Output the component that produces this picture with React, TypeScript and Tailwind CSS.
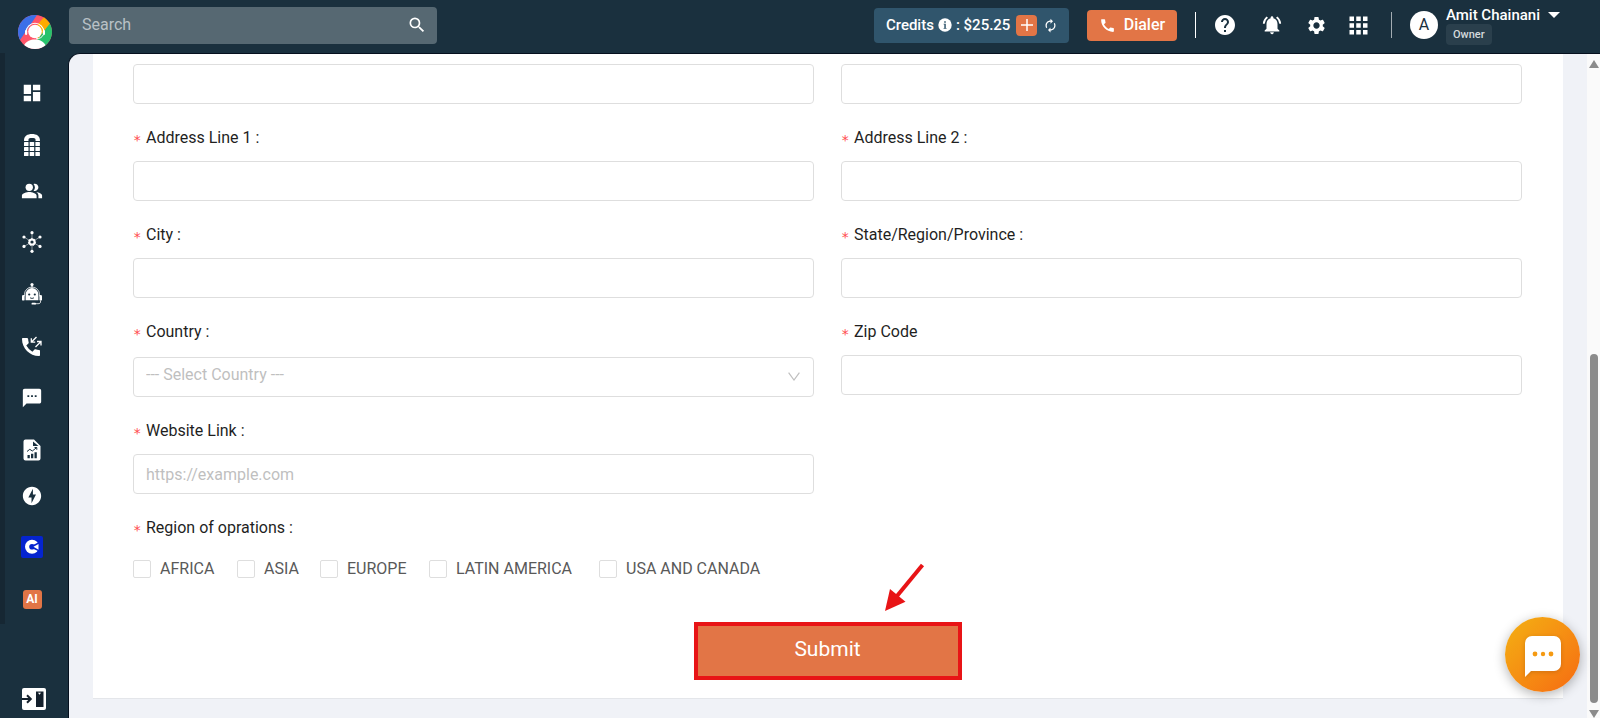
import { useState } from "react";
import type { ReactNode } from "react";
import {
  MdApps,
  MdAutorenew,
  MdCall,
  MdDashboard,
  MdHelp,
  MdNotificationsActive,
  MdOfflineBolt,
  MdPeopleAlt,
  MdSearch,
  MdSettings,
  MdSms,
} from "react-icons/md";

function Logo() {
  return (
    <svg viewBox="0 0 34 34" className="h-[34px] w-[34px]" aria-hidden="true">
      <defs>
        <clipPath id="logo-disc">
          <circle cx="17" cy="17" r="17" />
        </clipPath>
      </defs>
      <g clipPath="url(#logo-disc)">
        <rect width="34" height="34" fill="#ff5569" />
        <path d="M0 0H19L2 25H-6Z" fill="#3c6fe8" />
        <path d="M27 1L33 8L20 24L14 16Z" fill="#ffab00" />
        <path d="M33 7L40 18L28 34L19 25Z" fill="#27c26c" />
        <path d="M5 34C6 27 11 24.500 17 24.500S27 27 29 34Z" fill="#fff" />
        <path d="M8.200 17A8.800 8.800 0 0 1 25.800 17" fill="none" stroke="#fff" strokeWidth="1.100" />
        <rect x="7" y="15" width="2.200" height="5" rx="1.100" fill="#fff" />
        <rect x="24.800" y="15" width="2.200" height="5" rx="1.100" fill="#fff" />
        <circle cx="17" cy="16.500" r="6.800" fill="#fff" />
        <path d="M25.500 19.500C24 22.500 22 23.600 18 23.800" fill="none" stroke="#fff" strokeWidth="1" />
      </g>
    </svg>
  );
}

function KeypadIcon() {
  return (
    <svg viewBox="0 0 18 22" className="h-[22px] w-[18px]" fill="currentColor" aria-hidden="true">
      <path d="M1 6.500C1 2 4.500 0 9 0s8 2 8 6.500c0 .4-.2.500-.6.500h-3.300c-.4 0-.6-.2-.6-.6V5.200C12.500 4.400 11 4 9 4s-3.500.4-3.500 1.200v1.200c0 .4-.2.600-.6.600H1.600C1.200 7 1 6.900 1 6.500Z" />
      {[8, 13, 18].map((y) =>
        [1, 6.7, 12.4].map((x) => <rect key={`${x}-${y}`} x={x} y={y} width="4.500" height="4" rx=".5" />),
      )}
    </svg>
  );
}

function HubIcon() {
  const tips = [
    [10, 1.7],
    [18, 6],
    [18, 15.4],
    [10, 20.3],
    [2, 15.4],
    [2, 6],
  ];
  return (
    <svg viewBox="0 0 20 22" className="h-[22px] w-5" fill="currentColor" aria-hidden="true">
      {tips.map(([x, y]) => (
        <g key={`${x}-${y}`}>
          <path d={`M10 11L${x} ${y}`} stroke="currentColor" strokeWidth=".5" />
          <circle cx={x} cy={y} r="1.600" />
        </g>
      ))}
      <circle cx="10" cy="11" r="3.600" strokeDasharray="1.600 1.500" stroke="currentColor" strokeWidth="1" />
      <circle cx="10" cy="11" r="1.600" fill="#1a303e" />
    </svg>
  );
}

function BotIcon() {
  return (
    <svg viewBox="0 0 20 22" className="h-[22px] w-5" aria-hidden="true">
      <circle cx="10" cy="1.600" r="1.600" fill="#fff" />
      <path d="M10 2V5" stroke="#fff" strokeWidth="1" />
      <path d="M2.500 13V11.500a7.500 7.500 0 0 1 15 0V13" fill="none" stroke="#fff" strokeWidth=".8" />
      <path d="M3.600 17.300V11.500a6.400 6.400 0 0 1 12.800 0V17.300Z" fill="#fff" />
      <rect x="0" y="12" width="2.600" height="5.600" rx="1.200" fill="#fff" />
      <rect x="17.400" y="12" width="2.600" height="5.600" rx="1.200" fill="#fff" />
      <circle cx="7.200" cy="11.500" r="1.100" fill="#1a303e" />
      <circle cx="12.800" cy="11.500" r="1.100" fill="#1a303e" />
      <path d="M8 14.700C9 15.600 11 15.600 12 14.700" fill="none" stroke="#1a303e" strokeWidth=".9" />
      <path d="M18.500 17.500V19C18.500 20.300 17.500 20.700 16 20.700H12" fill="none" stroke="#fff" strokeWidth=".8" />
      <rect x="9.500" y="19.800" width="4.500" height="1.800" rx=".9" fill="#fff" />
    </svg>
  );
}

function CallFlowIcon() {
  return (
    <svg viewBox="0 0 20 20" className="h-5 w-5" fill="none" aria-hidden="true">
      <path
        d="M1 2h4c.6 0 1 .4 1.100 1 .1 1.200.3 2.300.6 3.400.1.400 0 .8-.3 1.100L4.300 9.600a15 15 0 0 0 6.100 6.100l2.100-2.100c.3-.3.700-.4 1.100-.3 1.100.4 2.200.6 3.400.6.600 0 1 .500 1 1.100v4c0 .600-.4 1-1 1C7.600 20 0 12.400 0 3c0-.6.4-1 1-1Z"
        fill="#fff"
      />
      <path d="M14.500 1L9.300 6.200M9.300 2.300V6.200H13.200" stroke="#fff" strokeWidth="1.300" />
      <path d="M13.500 11L18.800 5.700M15 5.500H19V9.500" stroke="#fff" strokeWidth="1.300" />
    </svg>
  );
}

function ReportIcon() {
  return (
    <svg viewBox="0 0 18 22" className="h-[22px] w-[18px]" aria-hidden="true">
      <path d="M2.500.5H11L17.500 7V19.500a2 2 0 0 1-2 2h-13a2 2 0 0 1-2-2V2.500a2 2 0 0 1 2-2Z" fill="#fff" />
      <path d="M10 2.500V7H15.500Z" fill="#1a303e" />
      <path d="M4 12.500L6.800 10.300L9.300 12L13.500 8.700M11.500 8.500H13.800V10.800" fill="none" stroke="#1a303e" strokeWidth="1" />
      <path d="M4.500 16H6.800V19.200H4.500ZM8 14.700H10.300V19.200H8ZM11.500 13.200H13.800V19.200H11.500Z" fill="#1a303e" />
    </svg>
  );
}

function PartnerIcon() {
  return (
    <svg viewBox="0 0 22 22" className="h-[22px] w-[22px]" aria-hidden="true">
      <rect width="22" height="22" rx="2" fill="#0524cf" />
      <circle cx="11" cy="10.800" r="7" fill="#fff" />
      <circle cx="11" cy="10.800" r="2.800" fill="#0524cf" />
      <path d="M11 9.500L17 6.500L19 4.500V17L17 15L11 12.200Z" fill="#0524cf" />
      <path d="M12.500 10.800L17.500 7.900V13.700Z" fill="#fff" />
    </svg>
  );
}

function ExpandIcon() {
  return (
    <svg viewBox="0 0 24 22" className="h-[22px] w-6" aria-hidden="true">
      <rect width="24" height="22" rx="2" fill="#fff" />
      <rect x="14" y="3.500" width="7.500" height="15.500" fill="#14202c" />
      <path d="M16 4.700H19L17.500 6.800Z" fill="#fff" />
      <path d="M0 11H8M5 7.200L8.800 11L5 14.800" fill="none" stroke="#14202c" strokeWidth="2" />
    </svg>
  );
}

const navItems: { label: string; icon: ReactNode; compact?: boolean }[] = [
  { label: "Dashboard", icon: <MdDashboard size={22} /> },
  { label: "Numbers", icon: <KeypadIcon /> },
  { label: "Contacts", icon: <MdPeopleAlt size={22} />, compact: true },
  { label: "Integrations", icon: <HubIcon /> },
  { label: "Bots", icon: <BotIcon /> },
  { label: "Call flows", icon: <CallFlowIcon /> },
  { label: "Messages", icon: <MdSms size={22} /> },
  { label: "Reports", icon: <ReportIcon /> },
  { label: "Automation", icon: <MdOfflineBolt size={22} />, compact: true },
  { label: "Partner", icon: <PartnerIcon /> },
  {
    label: "Assistant",
    icon: (
      <span className="flex h-[19px] w-[19px] items-center justify-center rounded-[3px] bg-[#e27546] text-xs font-bold">
        AI
      </span>
    ),
  },
];

function Sidebar() {
  return (
    <aside className="flex w-[68px] shrink-0 flex-col justify-between pb-2">
      <nav className="flex h-[571px] flex-col rounded-br border-l-[5px] border-[#162733] pt-3.5">
        {navItems.map((item) => (
          <a
            key={item.label}
            href="#"
            aria-label={item.label}
            className={
              item.compact
                ? "mb-[5px] ml-4 flex h-10 w-[22px] shrink-0 items-center justify-center"
                : "ml-4 flex h-[52px] w-[22px] shrink-0 items-center justify-center"
            }
          >
            {item.icon}
          </a>
        ))}
      </nav>
      <button type="button" aria-label="Expand menu" className="ml-[22px] w-6">
        <ExpandIcon />
      </button>
    </aside>
  );
}

function Header() {
  return (
    <header className="flex h-[53px] shrink-0 items-center pr-10 pb-[3px]">
      <a href="#" aria-label="Home" className="flex w-[69px] shrink-0 justify-center pt-3.5">
        <Logo />
      </a>
      <div className="flex h-[37px] w-[368px] items-center rounded bg-[#566872] pr-2.5 pl-[13px]">
        <input
          type="search"
          aria-label="Search"
          placeholder="Search"
          className="min-w-0 flex-1 bg-transparent text-base text-white outline-none placeholder:text-[#b9c1c6]"
        />
        <button type="button" aria-label="Run search">
          <MdSearch size={20} />
        </button>
      </div>

      <div className="ml-auto flex items-center">
        <div className="flex h-[35px] w-[195px] items-center rounded bg-[#30556c] pl-3 text-[15px] font-medium">
          <span>Credits</span>
          <svg viewBox="0 0 14 14" className="mx-1 h-3.5 w-3.5" aria-hidden="true">
            <circle cx="7" cy="7" r="6.700" fill="#fff" />
            <path d="M6.200 3.200H7.800V4.700H6.200ZM5.600 5.800H7.800V10H8.500V10.800H5.600V10H6.300V6.600H5.600Z" fill="#30556c" />
          </svg>
          <span>: $25.25</span>
          <button
            type="button"
            aria-label="Add credits"
            className="ml-1.5 flex h-[21px] w-[21px] items-center justify-center rounded bg-[#e27546]"
          >
            <svg viewBox="0 0 12 12" className="h-3 w-3" aria-hidden="true">
              <path d="M6 0V12M0 6H12" stroke="#fff" strokeWidth="1.500" />
            </svg>
          </button>
          <button type="button" aria-label="Refresh credits" className="ml-1.5">
            <MdAutorenew size={15} />
          </button>
        </div>
        <button
          type="button"
          className="ml-[18px] flex h-[31px] w-[90px] items-center justify-center gap-2 rounded bg-[#e27546] text-base font-medium"
        >
          <MdCall size={17} />
          Dialer
        </button>
        <span className="ml-[18px] h-[26px] w-px bg-white" />
        <button type="button" aria-label="Help" className="ml-[17px]">
          <MdHelp size={24} />
        </button>
        <button type="button" aria-label="Notifications" className="ml-6">
          <MdNotificationsActive size={22} />
        </button>
        <button type="button" aria-label="Settings" className="ml-[23px]">
          <MdSettings size={21} />
        </button>
        <button type="button" aria-label="Apps" className="ml-[18px]">
          <MdApps size={27} />
        </button>
        <span className="ml-[19px] h-[26px] w-px bg-[#a3acb2]" />
        <button type="button" className="ml-[18px] flex items-center gap-2 text-left">
          <span className="flex h-7 w-7 items-center justify-center rounded-full bg-white text-base text-[#1a303e]">
            A
          </span>
          <span className="flex flex-col items-start">
            <span className="flex items-center gap-2 text-[15px] leading-[18px] font-medium">
              Amit Chainani
              <svg viewBox="0 0 12 6" className="h-1.5 w-3" aria-hidden="true">
                <path d="M0 0H12L6 6Z" fill="#fff" />
              </svg>
            </span>
            <span className="rounded bg-[#2a3f4c] px-[7px] text-[11px] leading-[21px] font-medium text-[#d5dadd]">
              Owner
            </span>
          </span>
        </button>
      </div>
    </header>
  );
}

function Label({ htmlFor, children }: { htmlFor: string; children: ReactNode }) {
  return (
    <label htmlFor={htmlFor} className="mt-[22px] flex h-6 items-center text-base text-[#1f1f1f]">
      <Star />
      {children}
    </label>
  );
}

function Star() {
  return <span className="w-[13px] pt-1 font-['DejaVu_Sans_Mono',monospace] text-sm leading-5 text-[#ff4d4f]">*</span>;
}

const fieldBox =
  "h-10 w-full rounded border border-[#dedede] bg-white px-3 text-base text-[#333] outline-none placeholder:text-[#bfbfbf]";

function Field({ id, label, placeholder }: { id: string; label: string; placeholder?: string }) {
  return (
    <div className="flex flex-col">
      <Label htmlFor={id}>{label}</Label>
      <input id={id} type="text" placeholder={placeholder} className={`mt-[11px] ${fieldBox}`} />
    </div>
  );
}

const regions = ["AFRICA", "ASIA", "EUROPE", "LATIN AMERICA", "USA AND CANADA"];

function AddressForm() {
  const [country, setCountry] = useState("");
  return (
    <form
      className="mx-6 border-b border-[#e4e6ea] bg-white pt-2.5 pr-[41px] pb-[18px] pl-10"
      onSubmit={(event) => event.preventDefault()}
    >
      <div className="grid grid-cols-2 gap-x-[27px]">
        <input type="text" aria-label="Business name" className={fieldBox} />
        <input type="text" aria-label="Business type" className={fieldBox} />
        <Field id="address1" label="Address Line 1 :" />
        <Field id="address2" label="Address Line 2 :" />
        <Field id="city" label="City :" />
        <Field id="state" label="State/Region/Province :" />
        <div className="flex flex-col">
          <Label htmlFor="country">Country :</Label>
          <div className="relative mt-[13px]">
            <select
              id="country"
              value={country}
              onChange={(event) => setCountry(event.target.value)}
              className="h-10 w-full appearance-none rounded border border-[#dedede] bg-white px-3 pb-1 text-base text-[#bfbfbf] outline-none"
            >
              <option value="">--- Select Country ---</option>
              <option value="IN">India</option>
              <option value="US">United States</option>
            </select>
            <svg
              viewBox="0 0 12 9"
              className="pointer-events-none absolute top-[15px] right-[14px] h-[9px] w-3"
              fill="none"
              aria-hidden="true"
            >
              <path d="M.6.6L6 8L11.400.6" stroke="#bfbfbf" strokeWidth="1.200" />
            </svg>
          </div>
        </div>
        <Field id="zip" label="Zip Code" />
        <Field id="website" label="Website Link :" placeholder="https://example.com" />
      </div>

      <fieldset>
        <legend className="flex h-[46px] items-end pt-[22px] text-base leading-6 text-[#1f1f1f]">
          <Star />
          Region of oprations :
        </legend>
        <div className="grid grid-cols-[104px_83px_109px_170px_auto] pt-[17px]">
          {regions.map((region) => (
            <label key={region} className="flex items-center gap-[9px] text-base whitespace-nowrap text-[#595959]">
              <input
                type="checkbox"
                className="h-[18px] w-[18px] appearance-none rounded-xs border border-[#dedede] bg-white checked:bg-[#e27546]"
              />
              {region}
            </label>
          ))}
        </div>
      </fieldset>

      <div className="relative mt-[41px] flex justify-center">
        <button
          type="submit"
          className="h-[58px] w-[268px] border-4 border-[#e81416] bg-[#e27546] pb-[3px] text-[21px] text-white"
        >
          Submit
        </button>
        <svg
          viewBox="0 0 40 49"
          className="pointer-events-none absolute bottom-[68px] left-1/2 ml-[57px] h-[49px] w-10"
          aria-hidden="true"
        >
          <path d="M37.500 2L12 33" stroke="#e81416" strokeWidth="4" />
          <path d="M0 48L5 26L20.500 38.700Z" fill="#e81416" />
        </svg>
      </div>
    </form>
  );
}

function ScrollTrack() {
  return (
    <div className="flex w-[13px] shrink-0 flex-col items-center bg-[#fafafa] pt-1.5" aria-hidden="true">
      <svg viewBox="0 0 10 8" className="h-2 w-2.5">
        <path d="M5 0L10 8H0Z" fill="#8b8b8b" />
      </svg>
      <div className="flex w-full flex-1 flex-col items-center justify-end pb-[7px]">
        <div className="h-[55%] w-2 rounded-full bg-[#8b8b8b]" />
      </div>
      <svg viewBox="0 0 10 8" className="h-2 w-2.5">
        <path d="M0 0H10L5 8Z" fill="#8b8b8b" />
      </svg>
    </div>
  );
}

function ChatLauncher() {
  return (
    <button
      type="button"
      aria-label="Open chat"
      className="fixed right-5 bottom-[26px] flex h-[75px] w-[75px] items-center justify-center rounded-full bg-linear-to-br from-[#f3b013] to-[#f56a12] shadow-[0_3px_12px_rgba(0,0,0,0.3)]"
    >
      <svg viewBox="0 0 36 42" className="mt-1 h-[42px] w-9 drop-shadow-sm" aria-hidden="true">
        <path d="M7 0H29A7 7 0 0 1 36 7V28A7 7 0 0 1 29 35H6L0 41V7A7 7 0 0 1 7 0Z" fill="#fff" />
        <circle cx="10" cy="18" r="2.400" fill="#f59a12" />
        <circle cx="18" cy="18" r="2.200" fill="#f59a12" />
        <circle cx="26" cy="18" r="2.400" fill="#f59a12" />
      </svg>
    </button>
  );
}

export default function App() {
  return (
    <div className="flex h-screen flex-col overflow-hidden bg-[#1a303e] font-['Roboto',sans-serif] text-white">
      <Header />
      <div className="flex min-h-0 flex-1">
        <Sidebar />
        <div className="flex min-w-0 flex-1 overflow-hidden rounded-tl-xl border-t border-l border-[#06101e] bg-[#f0f2f7]">
          <main className="min-w-0 flex-1 overflow-hidden">
            <AddressForm />
          </main>
          <ScrollTrack />
        </div>
      </div>
      <ChatLauncher />
    </div>
  );
}
